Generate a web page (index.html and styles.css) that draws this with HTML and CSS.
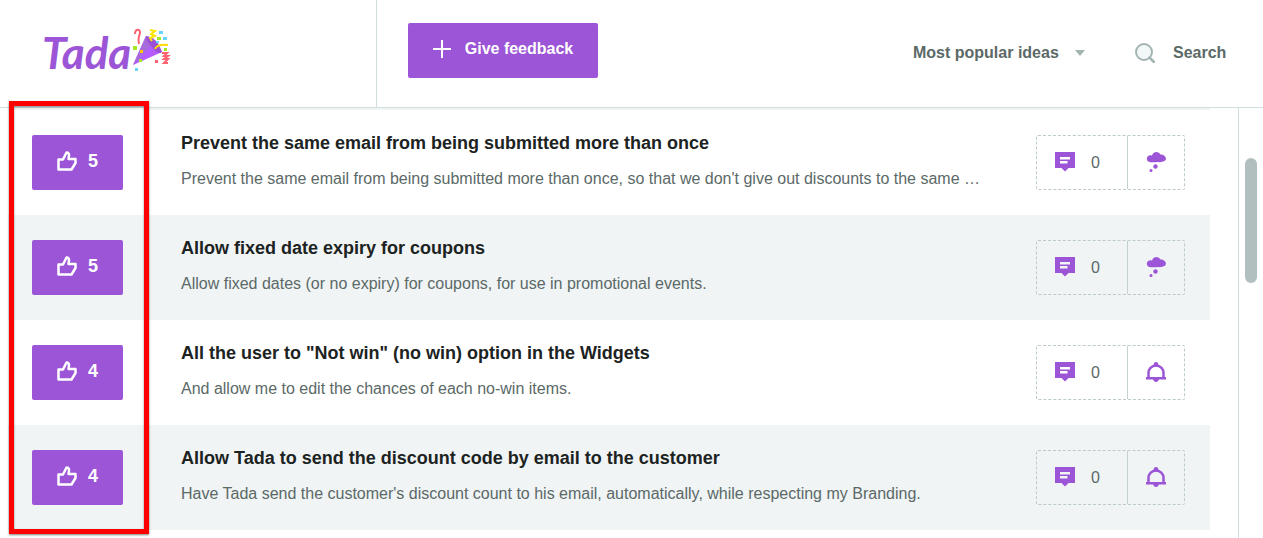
FILE: index.html
```html
<!DOCTYPE html>
<html lang="en">
  <head>
    <meta charset="UTF-8" />
    <meta name="viewport" content="width=device-width, initial-scale=1.0" />
    <title>Tada Feedback</title>
    <link rel="stylesheet" href="styles.css">
  </head>
  <body>
    <!-- Shared icons -->
    <svg class="sprite" aria-hidden="true">
      <symbol id="icon-like" viewBox="0 0 20 20">
        <path d="M1.5 8.5H6L9.5 1.5C11.5 1.5 12.3 3 12 4.5L11.5 8H18.5V12L14.5 18.5H1.5Z" fill="none" stroke="currentColor" stroke-width="2.5" stroke-linejoin="round" />
      </symbol>
      <symbol id="icon-comment" viewBox="0 0 20 20">
        <path fill-rule="evenodd" d="M0 0H20V16H13.5L10 19.5L6.5 16H0ZM5 5V7.500H15V5ZM5 9V11.500H12.500V9Z" fill="currentColor" />
      </symbol>
      <symbol id="icon-thought" viewBox="0 0 20 20">
        <path d="M3 10A3.500 3.500 0 0 1 3 3.500Q4.500 3 6 3.500Q7 0 10.500 0Q13.500 0 14.500 2.500Q17.500 2 18.500 4Q20 5 20 7Q19.500 9 17 9.500Q14.500 10.500 12 10Q8 10.500 3 10Z" fill="currentColor" />
        <circle cx="9.500" cy="14.500" r="2.200" fill="currentColor" />
        <circle cx="5" cy="18.500" r="1.500" fill="currentColor" />
      </symbol>
      <symbol id="icon-bell" viewBox="0 0 20 20">
        <path d="M2.500 16V11A7.500 7.500 0 0 1 17.500 11V16" fill="none" stroke="currentColor" stroke-width="2.500" />
        <path d="M0 15H20V17.500H13Q12 20 10 20Q8 20 7 17.500H0ZM6 4.500Q8 3 8 1Q10 -1 12 1Q12 3 14 4.500Z" fill="currentColor" />
      </symbol>
    </svg>

    <header class="header">
      <a class="logo" href="/">
        <span class="logo-text">Tada</span>
        <svg class="logo-popper" viewBox="0 0 40 44" aria-hidden="true">
          <path d="M15 8L2 37L31 24Z" fill="#b35cff" />
          <path d="M15 8L2 37L21 17Z" fill="#a86bdc" />
          <path d="M15 8Q26 9 31 24Q27 27 22 20Q15 14 15 8Z" fill="#9b4fd6" />
          <path d="M4 6Q4 1 8 2Q10 4 8 8Q7 12 8 16" fill="none" stroke="#ff6370" stroke-width="2" />
          <path d="M19 2L24 3L20 6L24 8L19 10L21 13" fill="none" stroke="#ffe600" stroke-width="2" />
          <path d="M24 21Q26 16 37 17" fill="none" stroke="#ffd900" stroke-width="2" />
          <path d="M31 25H36L33 28H37L33 31H37L33 35H37" fill="none" stroke="#ff6370" stroke-width="2" />
          <path d="M28 3h4v3h-4zM32 9h4v3h-4zM25 13h3v2h-3zM4 40h3v3h-3z" fill="#65d5fb" />
          <path d="M2 18h4v4h-4zM26 9h4v3h-4zM33 20h3v3h-3zM8 31h3v3h-3z" fill="#a5e823" />
          <path d="M9 22h3v3h-3z" fill="#ffc800" />
          <path d="M24 32h3v3h-3z" fill="#ff6370" />
        </svg>
      </a>
      <button class="btn feedback-btn" type="button">
        <svg width="18" height="18" viewBox="0 0 18 18" aria-hidden="true">
          <path d="M9 0V18M0 9H18" stroke="currentColor" stroke-width="2" />
        </svg>
        Give feedback
      </button>
      <div class="tools">
        <div class="sort">
          <select class="sort-select" aria-label="Sort ideas">
            <option>Most popular ideas</option>
          </select>
        </div>
        <label class="search">
          <svg width="20" height="20" viewBox="0 0 20 20" aria-hidden="true">
            <circle cx="9" cy="9" r="8" fill="#f4f7f7" stroke="currentColor" stroke-width="2" />
            <path d="M14.5 14.5L19 19" stroke="currentColor" stroke-width="2.5" stroke-linecap="round" />
          </svg>
          <input class="search-input" type="text" placeholder="Search" aria-label="Search" />
        </label>
      </div>
    </header>

    <main class="page">
      <div class="ideas">
        <article class="idea">
          <button class="btn vote-btn" type="button">
            <svg width="20" height="20"><use href="#icon-like" /></svg>
            5
          </button>
          <div class="idea-body">
            <h3>Prevent the same email from being submitted more than once</h3>
            <p>Prevent the same email from being submitted more than once, so that we don't give out discounts to the same …</p>
          </div>
          <div class="stats">
            <a class="comments" href="#"><svg width="20" height="20"><use href="#icon-comment" /></svg>0</a>
            <span class="status"><svg width="20" height="20"><use href="#icon-thought" /></svg></span>
          </div>
        </article>
        <article class="idea">
          <button class="btn vote-btn" type="button">
            <svg width="20" height="20"><use href="#icon-like" /></svg>
            5
          </button>
          <div class="idea-body">
            <h3>Allow fixed date expiry for coupons</h3>
            <p>Allow fixed dates (or no expiry) for coupons, for use in promotional events.</p>
          </div>
          <div class="stats">
            <a class="comments" href="#"><svg width="20" height="20"><use href="#icon-comment" /></svg>0</a>
            <span class="status"><svg width="20" height="20"><use href="#icon-thought" /></svg></span>
          </div>
        </article>
        <article class="idea">
          <button class="btn vote-btn" type="button">
            <svg width="20" height="20"><use href="#icon-like" /></svg>
            4
          </button>
          <div class="idea-body">
            <h3>All the user to "Not win" (no win) option in the Widgets</h3>
            <p>And allow me to edit the chances of each no-win items.</p>
          </div>
          <div class="stats">
            <a class="comments" href="#"><svg width="20" height="20"><use href="#icon-comment" /></svg>0</a>
            <span class="status"><svg width="20" height="20"><use href="#icon-bell" /></svg></span>
          </div>
        </article>
        <article class="idea">
          <button class="btn vote-btn" type="button">
            <svg width="20" height="20"><use href="#icon-like" /></svg>
            4
          </button>
          <div class="idea-body">
            <h3>Allow Tada to send the discount code by email to the customer</h3>
            <p>Have Tada send the customer's discount count to his email, automatically, while respecting my Branding.</p>
          </div>
          <div class="stats">
            <a class="comments" href="#"><svg width="20" height="20"><use href="#icon-comment" /></svg>0</a>
            <span class="status"><svg width="20" height="20"><use href="#icon-bell" /></svg></span>
          </div>
        </article>
        <div class="highlight"></div>
      </div>
      <div class="scrollbar"><div class="scroll-thumb"></div></div>
    </main>
  </body>
</html>
```

FILE: styles.css
```css
* {
  box-sizing: border-box;
}
body {
  margin: 0;
  min-height: 100vh;
  display: flex;
  flex-direction: column;
  background: #fff;
  color: #5b6967;
  font-family: "Liberation Sans", Arial, sans-serif;
  font-size: 16px;
}
svg {
  display: block;
  flex: none;
}
.sprite {
  display: none;
}
.btn {
  display: flex;
  align-items: center;
  justify-content: center;
  height: 55px;
  padding: 0 0 3px;
  border: none;
  border-radius: 2px;
  background: #9b55d6;
  color: #fff;
  font-family: inherit;
  font-weight: 700;
  cursor: pointer;
}
.btn:hover {
  background: #8945c4;
}
/* Header */
.header {
  display: flex;
  border-bottom: 1px solid #cfdfdd;
}
.logo {
  display: flex;
  width: 377px;
  height: 107px;
  padding: 16px 0 0 42px;
  border-right: 1px solid #cfdfdd;
  color: #9b55d6;
  text-decoration: none;
}
.logo-text {
  font-family: Lato, sans-serif;
  font-size: 44px;
  font-style: italic;
  font-weight: 700;
  line-height: 72px;
}
.logo-popper {
  width: 40px;
  height: 44px;
  margin-top: 12px;
}
.feedback-btn {
  gap: 14px;
  width: 190px;
  margin: 23px 0 0 31px;
  font-size: 16px;
}
.tools {
  display: flex;
  align-items: center;
  gap: 50px;
  margin-left: auto;
  padding-bottom: 2px;
}
.sort {
  display: flex;
  align-items: center;
}
.sort::after {
  content: "";
  border: 5px solid transparent;
  border-top: 6px solid #a3b5b3;
  border-bottom: none;
}
.sort-select,
.search-input {
  padding: 0;
  border: none;
  outline: none;
  background: none;
  color: #5b6967;
  font-family: inherit;
  font-size: 16px;
  font-weight: 700;
}
.sort-select {
  appearance: none;
  padding-right: 16px;
  cursor: pointer;
}
.search {
  display: flex;
  align-items: center;
  gap: 18px;
  color: #a3b5b3;
}
.search-input {
  width: 90px;
}
.search-input::placeholder {
  color: #5b6967;
}
/* Ideas list */
.page {
  flex: 1;
  display: flex;
}
.ideas {
  position: relative;
  flex: 1;
  align-self: flex-start;
  min-width: 0;
  margin: 0 28px 0 8px;
  border-top: 2px solid #f0f4f5;
}
.idea {
  display: flex;
  padding: 25px 25px 25px 24px;
}
.idea:nth-child(even) {
  background: #f0f4f5;
}
.vote-btn {
  gap: 11px;
  width: 91px;
  font-size: 18px;
}
.idea-body {
  flex: 1;
  min-width: 0;
  margin: 0 44px 0 58px;
}
.idea-body h3,
.idea-body p {
  margin: 0;
  overflow: hidden;
  white-space: nowrap;
  text-overflow: ellipsis;
}
.idea-body h3 {
  margin: -3px 0 15px;
  color: #1c2322;
  font-size: 18px;
  line-height: 22px;
}
.idea-body p {
  line-height: 20px;
}
.stats {
  display: flex;
  height: 55px;
  border: 1px dashed #bccbc8;
  border-radius: 2px;
}
.stats svg {
  margin-bottom: 2px;
  color: #9b55d6;
}
.comments,
.status {
  display: flex;
  align-items: center;
  justify-content: center;
}
.comments {
  gap: 16px;
  width: 91px;
  padding-right: 9px;
  border-right: 1px solid #c5d1cf;
  color: #5b6967;
  text-decoration: none;
}
.status {
  width: 56px;
}
.highlight {
  position: absolute;
  top: -9px;
  bottom: -4px;
  left: 1px;
  width: 140px;
  border: 5px solid #f00;
  box-shadow: 0 1px 2px rgba(0, 0, 0, 0.5), inset 0 1px 2px rgba(0, 0, 0, 0.5);
  pointer-events: none;
}
.scrollbar {
  width: 25px;
  padding: 50px 6px 0;
  border-left: 1px solid #cfdfdd;
}
.scroll-thumb {
  height: 125px;
  border-radius: 6px;
  background: #b1c0bf;
}
```
